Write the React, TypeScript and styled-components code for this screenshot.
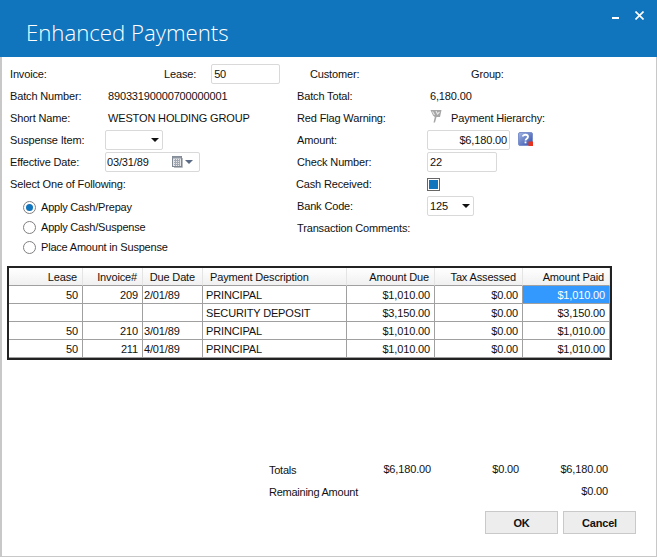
import { FC } from 'react';
import styled, { createGlobalStyle } from 'styled-components';

const GlobalStyle = createGlobalStyle`
  html, body {
    margin: 0;
    padding: 0;
    background: #fff;
  }
`;

const Window = styled.div`
  width: 657px;
  height: 557px;
  box-sizing: border-box;
  border: 1px solid #c8c8c8;
  border-left-width: 2px;
  border-top: none;
  display: flex;
  flex-flow: column nowrap;
  font-family: 'Liberation Sans', Arial, sans-serif;
  font-size: 11px;
  letter-spacing: -0.15px;
  color: #111;
  background: #fff;
`;

const TitleBar = styled.div`
  height: 57px;
  margin: 0 -1px 0 -2px;
  flex: none;
  background: #1075bc;
  display: flex;
  justify-content: space-between;
`;

const Title = styled.h1`
  margin: 20px 0 0 26px;
  font-family: 'Open Sans', sans-serif;
  font-size: 22.2px;
  line-height: 26px;
  font-weight: 300;
  letter-spacing: 0;
  color: #fff;
`;

const WindowButtons = styled.div`
  display: flex;
  gap: 16px;
  margin: 11px 13px 0 0;
  height: 10px;
  align-items: flex-start;
`;

const Body = styled.div`
  flex: 1;
  padding: 6px 0 0 5px;
  display: flex;
  flex-flow: column nowrap;
`;

const Form = styled.div`
  display: grid;
  grid-template-columns: 287px 1fr;
  padding-left: 3px;
`;

const Column = styled.div`
  display: flex;
  flex-flow: column nowrap;
`;

const Row = styled.div<{ $label?: number }>`
  height: 22px;
  display: grid;
  grid-template-columns: ${(p) => p.$label ?? 98}px 1fr;
  align-items: center;
`;

const RightRow = styled(Row)`
  grid-template-columns: 130px 1fr;
`;

const Label = styled.span<{ $shift?: number }>`
  white-space: nowrap;
  margin-left: ${(p) => p.$shift ?? 0}px;
`;

const Inline = styled.div`
  display: flex;
  align-items: center;
`;

const TextBox = styled.div<{ $width: number; $right?: boolean; $gap?: number }>`
  width: ${(p) => p.$width}px;
  height: 20px;
  margin-left: ${(p) => p.$gap ?? 0}px;
  box-sizing: border-box;
  border: 1px solid #d9d9d9;
  border-radius: 2px;
  background: #fff;
  display: flex;
  align-items: center;
  justify-content: ${(p) => (p.$right ? 'flex-end' : 'space-between')};
  padding: 0 2px;
`;

const DropArrow = styled.span<{ $color?: string }>`
  width: 0;
  height: 0;
  border-left: 4px solid transparent;
  border-right: 4px solid transparent;
  border-top: 4px solid ${(p) => p.$color ?? '#111'};
`;

const ComboBox = styled(TextBox)`
  padding: 0 3px 0 2px;
`;

const DateBox = styled(TextBox)`
  padding: 0 6px 0 1px;
`;

const Icons = styled.span`
  display: flex;
  align-items: center;
  gap: 2px;
`;

const FlagSlot = styled.span`
  display: flex;
  margin: 0 0 5px 3px;
`;

const HelpSlot = styled.span`
  display: flex;
  margin: 0 0 3px 8px;
`;

const RadioList = styled.div`
  display: flex;
  flex-flow: column nowrap;
  padding: 2px 0 0 13px;
  letter-spacing: -0.2px;
`;

const RadioRow = styled.label`
  height: 20px;
  display: flex;
  align-items: center;
  gap: 5px;
`;

const RadioCircle = styled.span<{ $checked?: boolean }>`
  width: 13px;
  height: 13px;
  box-sizing: border-box;
  border: 1px solid #808080;
  border-radius: 50%;
  background: #fff;
  display: flex;
  align-items: center;
  justify-content: center;

  &::after {
    content: '';
    width: 7px;
    height: 7px;
    border-radius: 50%;
    background: ${(p) => (p.$checked ? '#1075bc' : 'transparent')};
  }
`;

const CheckBox = styled.span`
  width: 13px;
  height: 13px;
  box-sizing: border-box;
  border: 1px solid #666;
  background: #1075bc;
  box-shadow: inset 0 0 0 1px #fff;
`;

const Grid = styled.table`
  margin: 9px 0 0 0;
  width: 605px;
  box-sizing: border-box;
  table-layout: fixed;
  border-collapse: separate;
  border-spacing: 0;
  border: 2px solid #222;
  font-size: 11px;
`;

const HeadCell = styled.th<{ $left?: boolean; $pad?: number }>`
  height: 16px;
  padding: 1px ${(p) => p.$pad ?? 5}px 0 0;
  font-weight: 400;
  text-align: ${(p) => (p.$left ? 'left' : 'right')};
  ${(p) => (p.$left ? 'padding-left: 7px;' : '')}
  background: linear-gradient(#fff, #f0f0f0);
  border-right: 1px solid #e4e4e4;
  border-bottom: 1px solid #a0a0a0;
  white-space: nowrap;
`;

const Cell = styled.td<{ $left?: boolean; $selected?: boolean }>`
  height: 16px;
  padding: 1px 4px 0 3px;
  text-align: ${(p) => (p.$left ? 'left' : 'right')};
  background: ${(p) => (p.$selected ? '#3399ff' : '#fff')};
  color: ${(p) => (p.$selected ? '#fff' : '#111')};
  border-right: 1px solid #a0a0a0;
  border-bottom: 1px solid #a0a0a0;
  white-space: nowrap;
`;

const DateCell = styled(Cell)`
  padding-left: 1px;
`;

const Summary = styled.div`
  margin-top: 99px;
  width: 601px;
  padding-left: 262px;
  box-sizing: border-box;
`;

const SummaryRow = styled.div`
  height: 22px;
  display: grid;
  grid-template-columns: 88px 74px 88px 1fr;
  align-items: center;
  text-align: right;
`;

const SummaryLabel = styled.span`
  text-align: left;
  white-space: nowrap;
  letter-spacing: -0.25px;
`;

const SummaryValue = styled.span`
  margin-bottom: 2px;
`;

const Actions = styled.div`
  display: flex;
  justify-content: flex-end;
  gap: 5px;
  margin: 8px 20px 0 0;
`;

const Button = styled.button`
  width: 73px;
  height: 23px;
  padding: 0;
  border: 1px solid #c9c9c9;
  background: #ededed;
  font-family: inherit;
  font-size: 11px;
  letter-spacing: -0.2px;
  font-weight: 700;
  color: #111;
`;

const MinimizeIcon = () => (
  <svg width="7" height="10" viewBox="0 0 7 10">
    <rect x="0" y="6" width="7" height="2" fill="#fff" />
  </svg>
);

const CloseIcon = () => (
  <svg width="9" height="9" viewBox="0 0 9 9">
    <path d="M0.5 0.5 L8.5 8.5 M8.5 0.5 L0.5 8.5" stroke="#fff" strokeWidth="1.6" />
  </svg>
);

const CalendarIcon = () => (
  <svg width="11" height="12" viewBox="0 0 11 12">
    <rect x="0.5" y="0.5" width="9" height="10" fill="#e4e6ea" stroke="#7d8591" />
    <rect x="0.5" y="0.5" width="9" height="2" fill="#8f97a3" />
    <path d="M2 4.5h6M2 6.5h6M2 8.5h6M3.5 3v7M5.5 3v7M7.5 3v7" stroke="#a2a8b1" strokeWidth="1" />
    <path d="M10.5 2v9.5H2" fill="none" stroke="#b9bdc3" />
  </svg>
);

const FlagIcon = () => (
  <svg width="12" height="14" viewBox="0 0 12 14">
    <path d="M0.5 1 L11.5 1 L10 8 L6.5 8 L5 13.5 L3.5 13.5 L4.8 8 L3 6.5 Z" fill="#a6a6a6" />
    <path d="M2.5 2.5 L4.5 6 M6 2 L7.5 5 L9.5 3" fill="none" stroke="#e8e8e8" strokeWidth="1.1" />
  </svg>
);

const HelpIcon = () => (
  <svg width="15" height="14" viewBox="0 0 15 14">
    <defs>
      <linearGradient id="helpFill" x1="0" y1="0" x2="1" y2="1">
        <stop offset="0" stopColor="#a3b6e2" />
        <stop offset="1" stopColor="#2f4cab" />
      </linearGradient>
    </defs>
    <rect x="0.5" y="0.5" width="14" height="13" rx="1.5" fill="url(#helpFill)" stroke="#7d92cc" />
    <path d="M4.8 4.6 C4.8 2.2 10 2 10 4.8 C10 6.8 7.5 6.6 7.5 8.6" fill="none" stroke="#fff" strokeWidth="1.8" />
    <rect x="6.6" y="9.5" width="1.8" height="1.8" fill="#fff" />
    <rect x="10.5" y="9.5" width="4.5" height="4.5" fill="#e8321e" />
  </svg>
);

interface Payment {
  lease: string;
  invoice: string;
  due: string;
  description: string;
  amountDue: string;
  amountPaid: string;
  selected?: boolean;
}

const payments: Payment[] = [
  { lease: '50', invoice: '209', due: '2/01/89', description: 'PRINCIPAL', amountDue: '$1,010.00', amountPaid: '$1,010.00', selected: true },
  { lease: '', invoice: '', due: '', description: 'SECURITY DEPOSIT', amountDue: '$3,150.00', amountPaid: '$3,150.00' },
  { lease: '50', invoice: '210', due: '3/01/89', description: 'PRINCIPAL', amountDue: '$1,010.00', amountPaid: '$1,010.00' },
  { lease: '50', invoice: '211', due: '4/01/89', description: 'PRINCIPAL', amountDue: '$1,010.00', amountPaid: '$1,010.00' },
];

const columnWidths = [74, 60, 60, 144, 88, 88, 87];

const App: FC = () => (
  <Window>
    <GlobalStyle />
    <TitleBar>
      <Title>Enhanced Payments</Title>
      <WindowButtons>
        <MinimizeIcon />
        <CloseIcon />
      </WindowButtons>
    </TitleBar>
    <Body>
      <Form>
        <Column>
          <Row $label={154}>
            <Label>Invoice:</Label>
            <Inline>
              <Label>Lease:</Label>
              <TextBox $width={69} $gap={15}>50</TextBox>
            </Inline>
          </Row>
          <Row>
            <Label>Batch Number:</Label>
            <span>89033190000700000001</span>
          </Row>
          <Row>
            <Label>Short Name:</Label>
            <span>WESTON HOLDING GROUP</span>
          </Row>
          <Row $label={95}>
            <Label>Suspense Item:</Label>
            <ComboBox $width={58}>
              <span />
              <DropArrow />
            </ComboBox>
          </Row>
          <Row $label={95}>
            <Label>Effective Date:</Label>
            <DateBox $width={95}>
              03/31/89
              <Icons>
                <CalendarIcon />
                <DropArrow $color="#5b6b85" />
              </Icons>
            </DateBox>
          </Row>
          <Row>
            <Label>Select One of Following:</Label>
          </Row>
          <RadioList>
            <RadioRow>
              <RadioCircle $checked />
              Apply Cash/Prepay
            </RadioRow>
            <RadioRow>
              <RadioCircle />
              Apply Cash/Suspense
            </RadioRow>
            <RadioRow>
              <RadioCircle />
              Place Amount in Suspense
            </RadioRow>
          </RadioList>
        </Column>
        <Column>
          <RightRow>
            <Label $shift={13}>Customer:</Label>
            <Label $shift={44}>Group:</Label>
          </RightRow>
          <RightRow>
            <Label>Batch Total:</Label>
            <Label $shift={3}>6,180.00</Label>
          </RightRow>
          <RightRow>
            <Label>Red Flag Warning:</Label>
            <Inline>
              <FlagSlot>
                <FlagIcon />
              </FlagSlot>
              <Label $shift={9}>Payment Hierarchy:</Label>
            </Inline>
          </RightRow>
          <RightRow>
            <Label>Amount:</Label>
            <Inline>
              <TextBox $width={83} $right>$6,180.00</TextBox>
              <HelpSlot>
                <HelpIcon />
              </HelpSlot>
            </Inline>
          </RightRow>
          <RightRow>
            <Label>Check Number:</Label>
            <TextBox $width={70}>22</TextBox>
          </RightRow>
          <RightRow>
            <Label $shift={-1}>Cash Received:</Label>
            <CheckBox />
          </RightRow>
          <RightRow>
            <Label>Bank Code:</Label>
            <ComboBox $width={47}>
              125
              <DropArrow />
            </ComboBox>
          </RightRow>
          <RightRow>
            <Label>Transaction Comments:</Label>
          </RightRow>
        </Column>
      </Form>
      <Grid>
        <colgroup>
          {columnWidths.map((width, index) => (
            <col key={index} width={width} />
          ))}
        </colgroup>
        <thead>
          <tr>
            <HeadCell>Lease</HeadCell>
            <HeadCell>Invoice#</HeadCell>
            <HeadCell $pad={7}>Due Date</HeadCell>
            <HeadCell $left>Payment Description</HeadCell>
            <HeadCell>Amount Due</HeadCell>
            <HeadCell $pad={6}>Tax Assessed</HeadCell>
            <HeadCell>Amount Paid</HeadCell>
          </tr>
        </thead>
        <tbody>
          {payments.map((payment, index) => (
            <tr key={index}>
              <Cell>{payment.lease}</Cell>
              <Cell>{payment.invoice}</Cell>
              <DateCell $left>{payment.due}</DateCell>
              <Cell $left>{payment.description}</Cell>
              <Cell>{payment.amountDue}</Cell>
              <Cell>$0.00</Cell>
              <Cell $selected={payment.selected}>{payment.amountPaid}</Cell>
            </tr>
          ))}
        </tbody>
      </Grid>
      <Summary>
        <SummaryRow>
          <SummaryLabel>Totals</SummaryLabel>
          <SummaryValue>$6,180.00</SummaryValue>
          <SummaryValue>$0.00</SummaryValue>
          <SummaryValue>$6,180.00</SummaryValue>
        </SummaryRow>
        <SummaryRow>
          <SummaryLabel>Remaining Amount</SummaryLabel>
          <span />
          <span />
          <SummaryValue>$0.00</SummaryValue>
        </SummaryRow>
      </Summary>
      <Actions>
        <Button>OK</Button>
        <Button>Cancel</Button>
      </Actions>
    </Body>
  </Window>
);

export default App;
